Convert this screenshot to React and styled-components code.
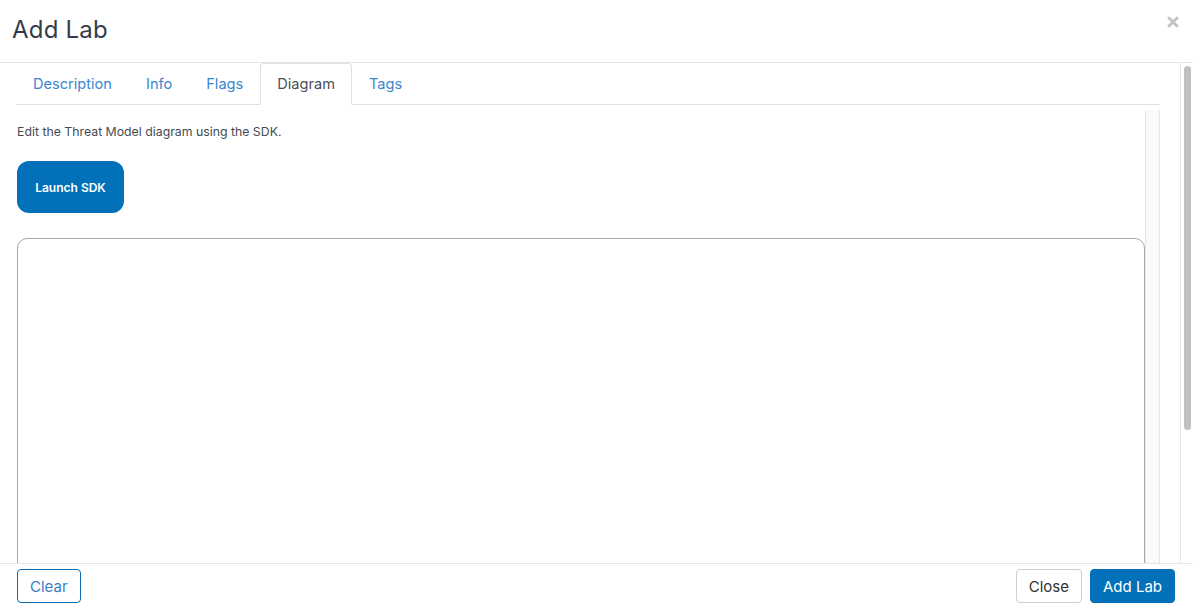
import React from "react";
import styled, { createGlobalStyle } from "styled-components";

const Global = createGlobalStyle`
  html, body { margin: 0; padding: 0; background: #fff; }
  body { font-family: Inter, "Open Sans", sans-serif; overflow: hidden; }
  * { box-sizing: border-box; }
`;

const Modal = styled.div`
  width: 1193px;
  height: 613px;
  display: flex;
  flex-direction: column;
  background: #fff;
`;

const Header = styled.div`
  height: 63px;
  flex: none;
  display: flex;
  align-items: flex-start;
  justify-content: space-between;
  padding: 14px 14px 0 12px;
  border-bottom: 1px solid #e5e5e5;
`;

const Title = styled.h1`
  margin: 0;
  font-size: 24px;
  line-height: 32px;
  font-weight: 400;
  color: #333c4a;
  letter-spacing: 0.2px;
`;

const CloseX = styled.button`
  border: 0;
  background: none;
  padding: 0;
  margin-top: 2px;
  width: 12px;
  height: 12px;
  cursor: pointer;
  display: flex;
`;

const Main = styled.div`
  flex: 1;
  min-height: 0;
  display: flex;
`;

const Body = styled.div`
  flex: 1;
  min-width: 0;
  overflow: hidden;
  padding: 0 20px 0 16px;
`;

const Track = styled.div`
  flex: none;
  width: ${p => p.$w}px;
  background: ${p => (p.$both ? "#fafafa" : "#fff")};
  border-left: 1px solid #e6e6e6;
  border-right: ${p => (p.$both ? "1px solid #e6e6e6" : "0")};
  padding: 3px 2px 0 3px;
`;

const Thumb = styled.div`
  height: ${p => p.$h}px;
  background: #c1c1c1;
  border-radius: 4px;
`;

const TabBar = styled.div`
  display: flex;
  height: 42px;
  border-bottom: 1px solid #dee2e6;
`;

const Tab = styled.button`
  font-family: inherit;
  font-size: 14.6px;
  line-height: 20px;
  padding: 10px 16px 10px;
  margin-bottom: -1px;
  background: ${p => (p.$active ? "#fff" : "transparent")};
  color: ${p => (p.$active ? "#4b5158" : "#3a86cf")};
  border: 1px solid ${p => (p.$active ? "#dee2e6" : "transparent")};
  border-bottom-color: ${p => (p.$active ? "#fff" : "transparent")};
  border-radius: 4px 4px 0 0;
  cursor: pointer;
`;

const Pane = styled.div`
  margin-top: 5px;
  height: 640px;
  display: flex;
`;

const PaneContent = styled.div`
  flex: 1;
  min-width: 0;
  padding: 12px 0 0 1px;
`;

const Hint = styled.p`
  margin: 0;
  font-size: 12.3px;
  line-height: 20px;
  color: #454b52;
`;

const LaunchButton = styled.button`
  margin-top: 19px;
  width: 107px;
  height: 52px;
  border: 0;
  border-radius: 12px;
  background: #0271b9;
  color: #fff;
  font-family: inherit;
  font-size: 12px;
  font-weight: 600;
  cursor: pointer;
`;

const Canvas = styled.div`
  margin-top: 25px;
  height: 500px;
  border: 1px solid #a9a9a9;
  border-radius: 10px;
`;

const Footer = styled.div`
  height: 50px;
  flex: none;
  border-top: 1px solid #e5e5e5;
  display: flex;
  align-items: flex-start;
  padding: 5px 18px 0 17px;
  gap: 8px;
`;

const Spacer = styled.div`
  flex: 1;
`;

const Btn = styled.button`
  height: 34px;
  padding: 0 12px;
  font-family: inherit;
  font-size: 15px;
  border-radius: 4px;
  cursor: pointer;
  ${p =>
    p.$variant === "outline"
      ? "background:#fff;border:1px solid #0b6fb5;color:#3a7fc6;"
      : p.$variant === "primary"
      ? "background:#0271b9;border:1px solid #0271b9;color:#fff;"
      : "background:#fff;border:1px solid #cfcfcf;color:#333;"}
`;

export default function App() {
  const tabs = ["Description", "Info", "Flags", "Diagram", "Tags"];
  return (
    <>
      <Global />
      <Modal>
        <Header>
          <Title>Add Lab</Title>
          <CloseX aria-label="close">
            <svg width="12" height="12" viewBox="0 0 12 12">
              <path d="M2 2 L10 10 M10 2 L2 10" stroke="#c4c4c4" strokeWidth="3" strokeLinecap="round" />
            </svg>
          </CloseX>
        </Header>
        <Main>
          <Body>
            <TabBar>
              {tabs.map(t => (
                <Tab key={t} $active={t === "Diagram"}>{t}</Tab>
              ))}
            </TabBar>
            <Pane>
              <PaneContent>
                <Hint>Edit the Threat Model diagram using the SDK.</Hint>
                <LaunchButton>Launch SDK</LaunchButton>
                <Canvas />
              </PaneContent>
              <Track $w={15} $both />
            </Pane>
          </Body>
          <Track $w={13}>
            <Thumb $h={364} />
          </Track>
        </Main>
        <Footer>
          <Btn $variant="outline">Clear</Btn>
          <Spacer />
          <Btn>Close</Btn>
          <Btn $variant="primary">Add Lab</Btn>
        </Footer>
      </Modal>
    </>
  );
}
